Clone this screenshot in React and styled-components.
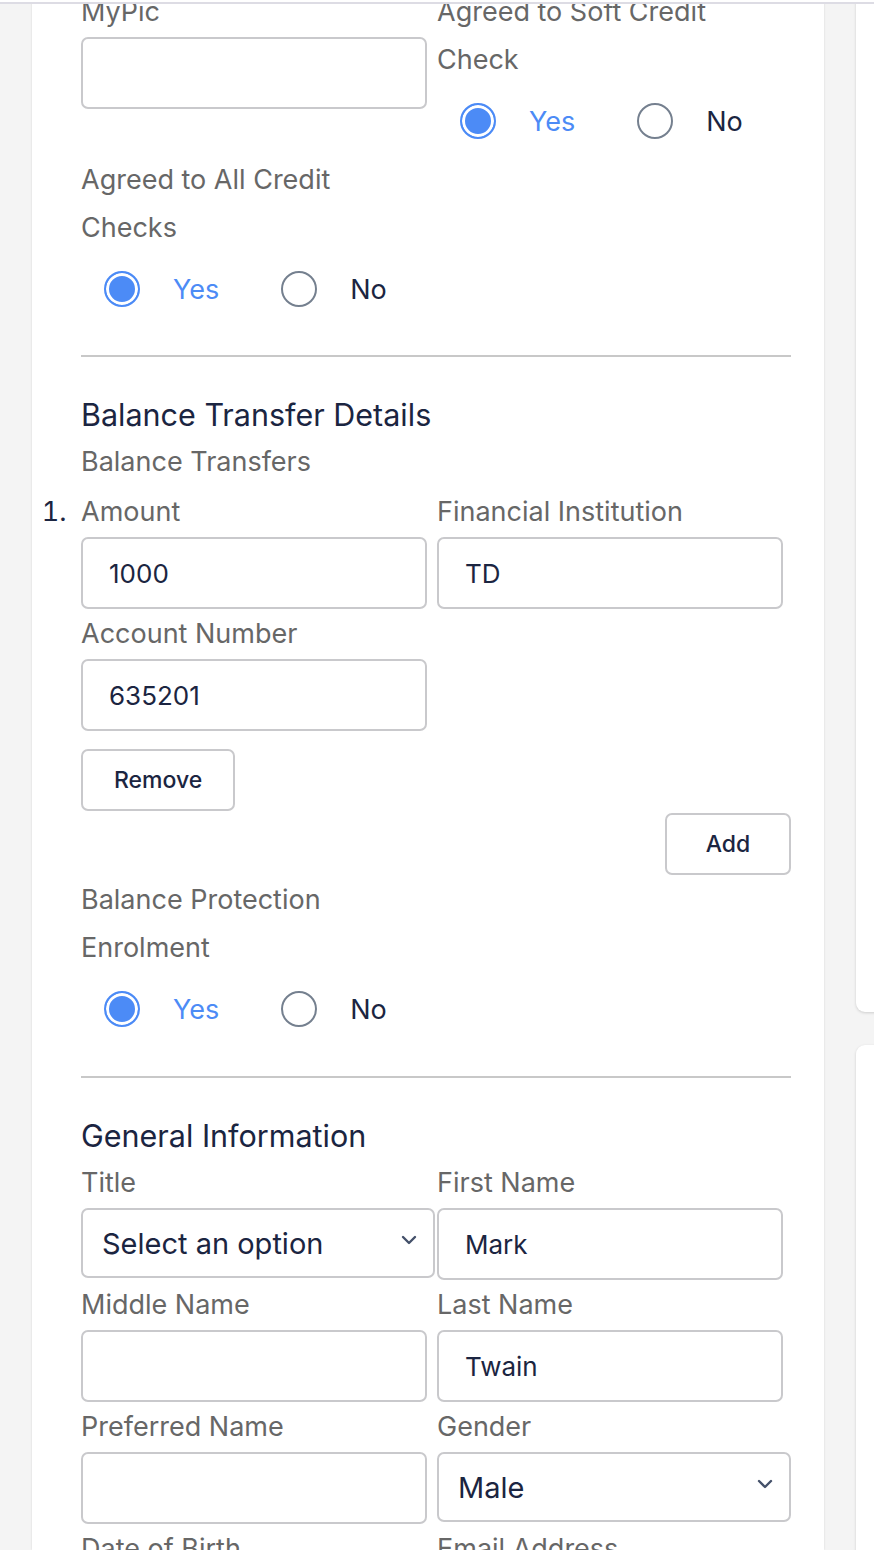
import React from 'react';
import styled, { createGlobalStyle } from 'styled-components';

const GlobalStyle = createGlobalStyle`
  html, body {
    margin: 0;
    padding: 0;
    background: #f4f4f4;
  }
  body {
    font-family: Inter, "Noto Sans", sans-serif;
    -webkit-font-smoothing: antialiased;
  }
`;

const NAVY = '#1b2541';
const GREY = '#676767';
const BLUE = '#4c8bf6';
const LINE = '#c9c9cc';

export default function App() {
  return (
    <>
      <GlobalStyle />
      <TopBar />
      <Page>
        <MainCard>
          <TopGrid>
            <Field>
              <Label>MyPic</Label>
              <TextInput defaultValue="" />
            </Field>
            <RadioGroup legend="Agreed to Soft Credit Check" value="yes" />
            <RadioGroup legend="Agreed to All Credit Checks" value="yes" />
          </TopGrid>

          <Divider />

          <SectionTitle>Balance Transfer Details</SectionTitle>
          <Label>Balance Transfers</Label>
          <TransferList>
            <TransferItem>
              <FormGrid>
                <Field>
                  <Label>Amount</Label>
                  <TextInput defaultValue="1000" />
                </Field>
                <Field>
                  <Label>Financial Institution</Label>
                  <TextInput defaultValue="TD" />
                </Field>
                <Field>
                  <Label>Account Number</Label>
                  <TextInput defaultValue="635201" />
                </Field>
              </FormGrid>
              <Actions>
                <ActionButton type="button">Remove</ActionButton>
              </Actions>
            </TransferItem>
          </TransferList>
          <Actions>
            <ActionButton type="button" $end>Add</ActionButton>
          </Actions>

          <RadioGroup legend="Balance Protection Enrolment" value="yes" $tight />

          <Divider $gap={43} />

          <SectionTitle>General Information</SectionTitle>
          <FormGrid>
            <Field>
              <Label>Title</Label>
              <Select defaultValue="" options={['Mr', 'Mrs', 'Ms', 'Dr']} placeholder="Select an option" />
            </Field>
            <Field>
              <Label>First Name</Label>
              <TextInput defaultValue="Mark" />
            </Field>
            <Field>
              <Label>Middle Name</Label>
              <TextInput defaultValue="" />
            </Field>
            <Field>
              <Label>Last Name</Label>
              <TextInput defaultValue="Twain" />
            </Field>
            <Field>
              <Label>Preferred Name</Label>
              <TextInput defaultValue="" />
            </Field>
            <Field>
              <Label>Gender</Label>
              <Select defaultValue="male" options={['Male', 'Female', 'Other']} />
            </Field>
            <Field>
              <Label>Date of Birth</Label>
              <TextInput defaultValue="" />
            </Field>
            <Field>
              <Label>Email Address</Label>
              <TextInput defaultValue="" />
            </Field>
          </FormGrid>
        </MainCard>

        <SideColumn>
          <SideCard $height={1032} $offset={-20} />
          <SideCard $height={600} />
        </SideColumn>
      </Page>
    </>
  );
}

function RadioGroup({ legend, value, $tight }) {
  return (
    <GroupBox $tight={$tight}>
      <Legend>{legend}</Legend>
      <RadioRow>
        <RadioOption $checked={value === 'yes'}>
          <RadioDot $checked={value === 'yes'} />
          Yes
        </RadioOption>
        <RadioOption $checked={value === 'no'}>
          <RadioDot $checked={value === 'no'} />
          No
        </RadioOption>
      </RadioRow>
    </GroupBox>
  );
}

function Select({ options, placeholder, defaultValue }) {
  return (
    <SelectWrap>
      <SelectBox defaultValue={defaultValue}>
        {placeholder && <option value="">{placeholder}</option>}
        {options.map((o) => (
          <option key={o} value={o.toLowerCase()}>
            {o}
          </option>
        ))}
      </SelectBox>
      <Chevron width="16" height="10" viewBox="0 0 16 10">
        <path d="M2 2l6 6 6-6" fill="none" stroke="#44516a" strokeWidth="2.4" strokeLinecap="round" strokeLinejoin="round" />
      </Chevron>
    </SelectWrap>
  );
}

const TopBar = styled.div`
  position: fixed;
  top: 0;
  left: 0;
  right: 0;
  height: 2px;
  background: #fff;
  border-bottom: 2px solid #dddce4;
  z-index: 10;
`;

const Page = styled.div`
  display: flex;
  gap: 32px;
  padding-left: 32px;
  height: 1550px;
  overflow: hidden;
`;

const MainCard = styled.main`
  flex: 0 0 792px;
  box-sizing: border-box;
  background: #fff;
  padding: 0 33px 0 49px;
  box-shadow: 0 0 2px rgba(0, 0, 0, 0.12);
`;

const SideColumn = styled.aside`
  flex: 0 0 300px;
  display: flex;
  flex-direction: column;
  gap: 33px;
`;

const SideCard = styled.div`
  flex: 0 0 ${(p) => p.$height}px;
  margin-top: ${(p) => p.$offset || 0}px;
  background: #fff;
  border-radius: 9px;
  box-shadow: 0 1px 3px rgba(0, 0, 0, 0.16);
`;

const TopGrid = styled.div`
  display: grid;
  grid-template-columns: 354px 354px;
  column-gap: 2px;
  row-gap: 11px;
  margin-top: -12px;
`;

const FormGrid = styled.div`
  display: grid;
  grid-template-columns: 354px 354px;
  column-gap: 2px;
  row-gap: 1px;
`;

const Field = styled.div`
  display: flex;
  flex-direction: column;
  gap: 1px;
`;

const Label = styled.label`
  display: block;
  font-size: 27px;
  line-height: 48px;
  color: ${GREY};
`;

const TextInput = styled.input`
  box-sizing: border-box;
  width: 346px;
  height: 72px;
  border: 2px solid ${LINE};
  border-radius: 7px;
  padding: 0 26px;
  font-family: inherit;
  font-size: 26px;
  color: ${NAVY};
  background: #fff;
  outline: none;
`;

const SelectWrap = styled.div`
  position: relative;
  width: 354px;
`;

const SelectBox = styled.select`
  box-sizing: border-box;
  width: 100%;
  height: 70px;
  border: 2px solid ${LINE};
  border-radius: 7px;
  padding: 0 50px 0 19px;
  font-family: inherit;
  font-size: 29px;
  color: ${NAVY};
  background: #fff;
  appearance: none;
  -webkit-appearance: none;
  outline: none;
`;

const Chevron = styled.svg`
  position: absolute;
  right: 18px;
  top: 27px;
  pointer-events: none;
`;

const GroupBox = styled.div`
  margin-top: ${(p) => (p.$tight ? 1 : 0)}px;
`;

const Legend = styled.div`
  max-width: 300px;
  font-size: 27px;
  line-height: 48px;
  color: ${GREY};
`;

const RadioRow = styled.div`
  display: flex;
  align-items: center;
  gap: 62px;
  height: 48px;
  margin-top: 13px;
  padding-left: 23px;
`;

const RadioOption = styled.label`
  display: flex;
  align-items: center;
  gap: 33px;
  font-size: 27px;
  color: ${(p) => (p.$checked ? BLUE : NAVY)};
`;

const RadioDot = styled.span`
  box-sizing: border-box;
  width: 36px;
  height: 36px;
  border-radius: 50%;
  border: 2px solid ${(p) => (p.$checked ? BLUE : '#75808f')};
  background: ${(p) => (p.$checked ? BLUE : '#fff')};
  box-shadow: ${(p) => (p.$checked ? 'inset 0 0 0 3px #fff' : 'none')};
`;

const Divider = styled.hr`
  width: 710px;
  height: 2px;
  margin: ${(p) => p.$gap || 42}px 0 0;
  border: 0;
  background: #c8c8c8;
`;

const SectionTitle = styled.h2`
  margin: 39px 0 4px;
  font-size: 30.5px;
  font-weight: 400;
  line-height: 38px;
  color: ${NAVY};
`;

const TransferList = styled.ol`
  margin: 2px 0 0;
  padding: 0;
  list-style: decimal outside;
`;

const TransferItem = styled.li`
  font-size: 27px;
  line-height: 48px;
  color: ${NAVY};

  &::marker {
    content: counter(list-item) ".\\00a0\\00a0";
    color: ${NAVY};
  }
`;

const Actions = styled.div`
  display: flex;
  flex-direction: column;
`;

const ActionButton = styled.button`
  align-self: ${(p) => (p.$end ? 'flex-end' : 'flex-start')};
  box-sizing: border-box;
  min-width: 126px;
  height: 62px;
  margin-top: ${(p) => (p.$end ? 2 : 18)}px;
  padding: 0 31px;
  border: 2px solid ${LINE};
  border-radius: 7px;
  background: #fff;
  font-family: inherit;
  font-size: 23px;
  font-weight: 500;
  color: ${NAVY};
`;
